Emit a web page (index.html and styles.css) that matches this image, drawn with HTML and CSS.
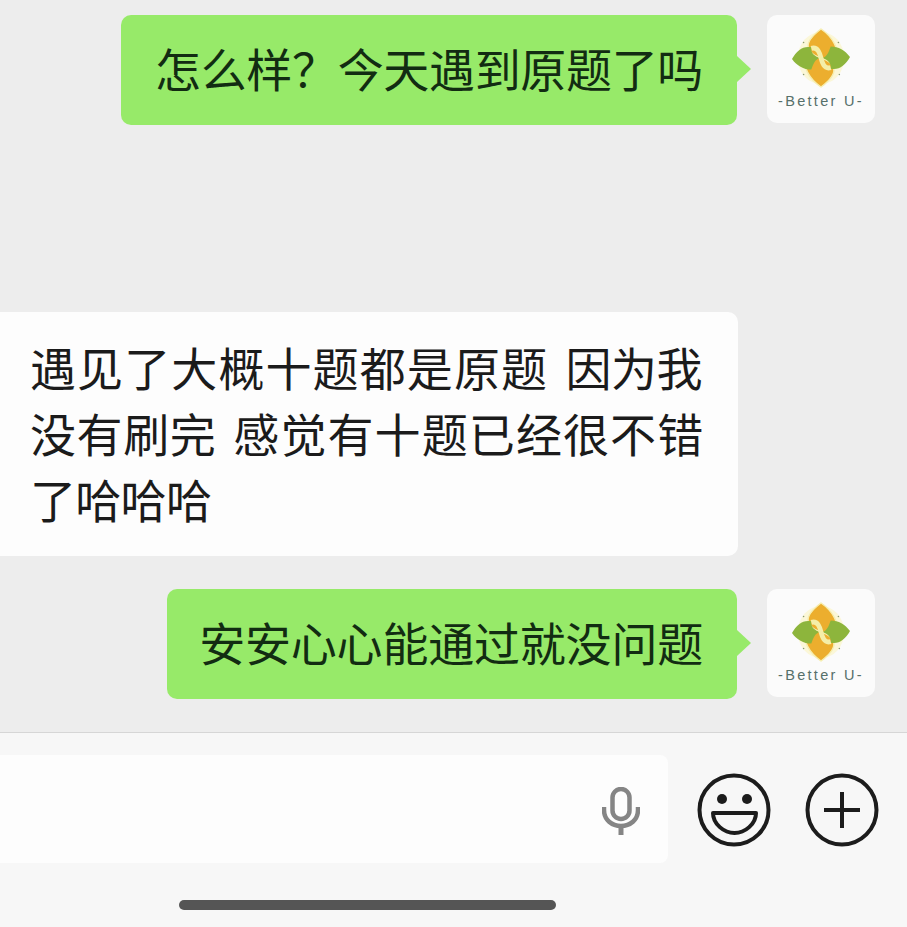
FILE: index.html
```html
<!DOCTYPE html>
<html lang="zh">
<head>
<meta charset="utf-8">
<title>Chat</title>
<link rel="stylesheet" href="styles.css">
</head>
<body>
<div class="screen">
  <main class="chat">
    <div class="row row-out first">
      <div class="bubble out"><span class="msg">怎么样&#xFF1F;今天遇到原题了吗</span></div>
      <div class="avatar">
        <svg class="logo" viewBox="0 0 60 60"><ellipse cx="30" cy="30" rx="24" ry="27" fill="#fbf7d8"/><path d="M30 0C22 6 15 14 17 20C20 28 30 30 36 32C40 33 43 33 46 33C50 22 42 8 30 0Z" fill="#ecae2e" stroke="#f6eeb0" stroke-width="1.500"/><path d="M30 60C38 54 45 46 43 40C40 32 30 30 24 28C20 27 17 27 14 27C10 38 18 52 30 60Z" fill="#ecae2e" stroke="#f6eeb0" stroke-width="1.500"/><path d="M0 31C5 22 12 17 20 19C19 25 24 29 29 30C24 31 22 36 20 42C12 42 5 38 0 31Z" fill="#8db53c"/><path d="M60 29C55 38 48 43 40 41C41 35 36 31 31 30C36 29 38 24 40 18C48 18 55 22 60 29Z" fill="#8db53c"/><path d="M20 20C27 18 29 26 30 30C31 34 33 42 40 40" fill="none" stroke="#f4eea8" stroke-width="5"/><circle cx="12" cy="14" r="0.800" fill="#8a9a70"/><circle cx="48" cy="14" r="0.800" fill="#8a9a70"/><circle cx="12" cy="47" r="0.800" fill="#8a9a70"/><circle cx="49" cy="47" r="0.800" fill="#8a9a70"/></svg>
        <span class="brand">-Better U-</span>
      </div>
    </div>
    <div class="row row-in">
      <div class="bubble in"><span class="line line-a">遇见了大概十题都是原题 <span class="tail-a">因为我</span></span><span class="line line-b">没有刷完 <span class="tail-b">感觉有十题已经很不错</span></span><span class="line line-c">了哈哈哈</span></div>
    </div>
    <div class="row row-out last">
      <div class="bubble out short"><span class="msg">安安心心能通过就没问题</span></div>
      <div class="avatar">
        <svg class="logo" viewBox="0 0 60 60"><ellipse cx="30" cy="30" rx="24" ry="27" fill="#fbf7d8"/><path d="M30 0C22 6 15 14 17 20C20 28 30 30 36 32C40 33 43 33 46 33C50 22 42 8 30 0Z" fill="#ecae2e" stroke="#f6eeb0" stroke-width="1.500"/><path d="M30 60C38 54 45 46 43 40C40 32 30 30 24 28C20 27 17 27 14 27C10 38 18 52 30 60Z" fill="#ecae2e" stroke="#f6eeb0" stroke-width="1.500"/><path d="M0 31C5 22 12 17 20 19C19 25 24 29 29 30C24 31 22 36 20 42C12 42 5 38 0 31Z" fill="#8db53c"/><path d="M60 29C55 38 48 43 40 41C41 35 36 31 31 30C36 29 38 24 40 18C48 18 55 22 60 29Z" fill="#8db53c"/><path d="M20 20C27 18 29 26 30 30C31 34 33 42 40 40" fill="none" stroke="#f4eea8" stroke-width="5"/><circle cx="12" cy="14" r="0.800" fill="#8a9a70"/><circle cx="48" cy="14" r="0.800" fill="#8a9a70"/><circle cx="12" cy="47" r="0.800" fill="#8a9a70"/><circle cx="49" cy="47" r="0.800" fill="#8a9a70"/></svg>
        <span class="brand">-Better U-</span>
      </div>
    </div>
  </main>
  <footer class="footer">
    <div class="composer">
      <div class="input">
        <svg class="mic" viewBox="0 0 38 48"><rect x="10.500" y="2" width="17" height="30" rx="8.500" fill="none" stroke="#858585" stroke-width="4.500"/><path d="M2 20V23C2 33 10 39 19 39C28 39 36 33 36 23V20" fill="none" stroke="#858585" stroke-width="4.500"/><path d="M19 39V48" stroke="#858585" stroke-width="5"/></svg>
      </div>
      <svg class="icon smile" viewBox="0 0 74 74"><circle cx="37" cy="37" r="34.500" fill="none" stroke="#1c1c1c" stroke-width="4"/><circle cx="25" cy="26" r="5" fill="#1c1c1c"/><circle cx="50" cy="26" r="5" fill="#1c1c1c"/><path d="M16 40H59C59 51 48 60 37.500 60C27 60 16 51 16 40Z" fill="none" stroke="#1c1c1c" stroke-width="4" stroke-linejoin="round"/></svg>
      <svg class="icon plus" viewBox="0 0 74 74"><circle cx="37" cy="37" r="34.500" fill="none" stroke="#1c1c1c" stroke-width="4"/><path d="M19 37H55M37 19V55" stroke="#1c1c1c" stroke-width="4"/></svg>
    </div>
    <div class="home-bar"></div>
  </footer>
</div>
</body>
</html>
```

FILE: styles.css
```css
* {
  box-sizing: border-box;
}

html,
body {
  margin: 0;
  padding: 0;
}

body {
  width: 907px;
  height: 927px;
  overflow: hidden;
  background: #ededed;
  font-family: "Noto Sans CJK SC", "Noto Sans", sans-serif;
  color: #1b1b1b;
}

.screen {
  display: flex;
  flex-direction: column;
  height: 927px;
}

.chat {
  flex: 0 0 732px;
  display: flex;
  flex-direction: column;
  padding: 15px 32px 0 0;
}

.row {
  display: flex;
}

.row-out {
  justify-content: flex-end;
  align-items: flex-start;
  gap: 30px;
}

.row-in {
  margin-top: 187px;
  margin-right: 137px;
}

.last {
  margin-top: 33px;
}

.bubble {
  position: relative;
  border-radius: 10px;
  font-size: 46px;
  line-height: 66px;
}

.out {
  height: 110px;
  padding: 19px 34px;
  background: #97ea69;
  color: #122c12;
  letter-spacing: -0.333px;
  white-space: nowrap;
}

.short {
  padding-left: 32px;
  letter-spacing: -0.2px;
}

.msg {
  display: block;
}

.out::after {
  content: "";
  position: absolute;
  right: -14px;
  top: 41px;
  border-left: 14px solid #97ea69;
  border-top: 13px solid transparent;
  border-bottom: 13px solid transparent;
}

.in {
  width: 738px;
  height: 244px;
  padding: 21px 0 0 30px;
  border-radius: 0 10px 10px 0;
  background: #fdfdfd;
  white-space: nowrap;
}

.line {
  display: block;
}

.line-a {
  letter-spacing: 1.1px;
  word-spacing: 6px;
}

.tail-a {
  letter-spacing: -0.5px;
}

.line-b {
  letter-spacing: 0.6px;
  word-spacing: 6px;
}

.tail-b {
  letter-spacing: 1.1px;
}

.line-c {
  letter-spacing: -0.7px;
}

.avatar {
  flex: 0 0 108px;
  height: 108px;
  display: flex;
  flex-direction: column;
  align-items: center;
  padding-top: 13px;
  border-radius: 10px;
  background: #fbfbfb;
}

.logo {
  display: block;
  width: 58px;
  height: 60px;
}

.brand {
  margin-top: 5px;
  font-family: "Liberation Sans", sans-serif;
  font-size: 14.5px;
  line-height: 16px;
  letter-spacing: 2.3px;
  color: #56706a;
  white-space: nowrap;
}

.footer {
  flex: 1;
  display: flex;
  flex-direction: column;
  border-top: 1px solid #d6d6d6;
  background: #f7f7f7;
}

.composer {
  display: flex;
  align-items: flex-start;
  margin-top: 22px;
}

.input {
  display: flex;
  justify-content: flex-end;
  align-items: center;
  width: 668px;
  height: 108px;
  padding-right: 28px;
  border-radius: 0 8px 8px 0;
  background: #fdfdfd;
}

.mic {
  display: block;
  width: 38px;
  height: 48px;
  margin-top: 4px;
}

.icon {
  display: block;
  width: 74px;
  height: 74px;
  margin-top: 18px;
}

.smile {
  margin-left: 29px;
}

.plus {
  margin-left: 34px;
}

.home-bar {
  width: 377px;
  height: 10px;
  margin: 37px 0 0 179px;
  border-radius: 5px;
  background: #555;
}
```
